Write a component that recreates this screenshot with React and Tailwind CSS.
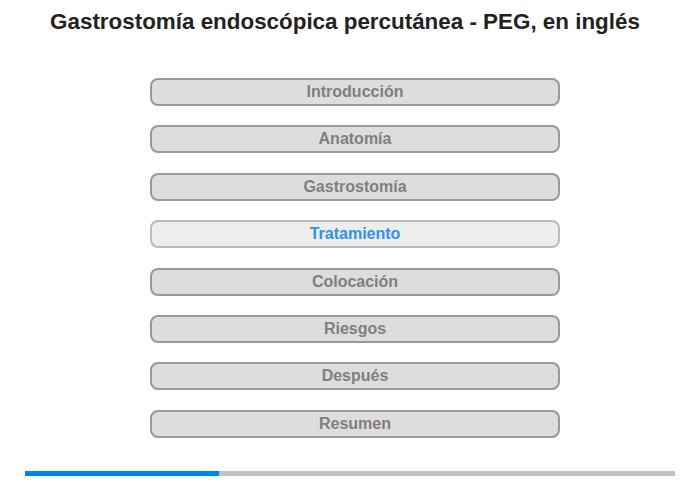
const sections = [
  "Introducción",
  "Anatomía",
  "Gastrostomía",
  "Tratamiento",
  "Colocación",
  "Riesgos",
  "Después",
  "Resumen",
];

const ACTIVE = 3;

export default function App() {
  return (
    <div
      className="w-[700px] h-[480px] bg-white flex flex-col items-center"
      style={{ fontFamily: '"Liberation Sans", Arial, sans-serif' }}
    >
      <h1 className="mt-[8px] mr-[10px] h-[28px] text-[22.4px] leading-[28px] font-bold text-[#222222]">
        Gastrostomía endoscópica percutánea - PEG, en inglés
      </h1>

      {/* Menu */}
      <div className="mt-[42px] ml-[10px] w-[410px] flex flex-col gap-[19.4px]">
        {sections.map((s, i) => (
          <button
            key={s}
            className={`h-[28px] w-full rounded-[8px] border-2 text-[16px] font-bold leading-none ${
              i === ACTIVE
                ? "bg-[#ededed] border-[#bbbbbb] text-[#2f90f5]"
                : "bg-[#dddddd] border-[#999999] text-[#7f7f7f]"
            }`}
          >
            {s}
          </button>
        ))}
      </div>

      {/* Progress */}
      <div className="mt-[33px] w-[650px] h-[5px] bg-[#c2c2c2] flex">
        <div className="w-[194px] h-full bg-[#0084f4]" />
      </div>
    </div>
  );
}
